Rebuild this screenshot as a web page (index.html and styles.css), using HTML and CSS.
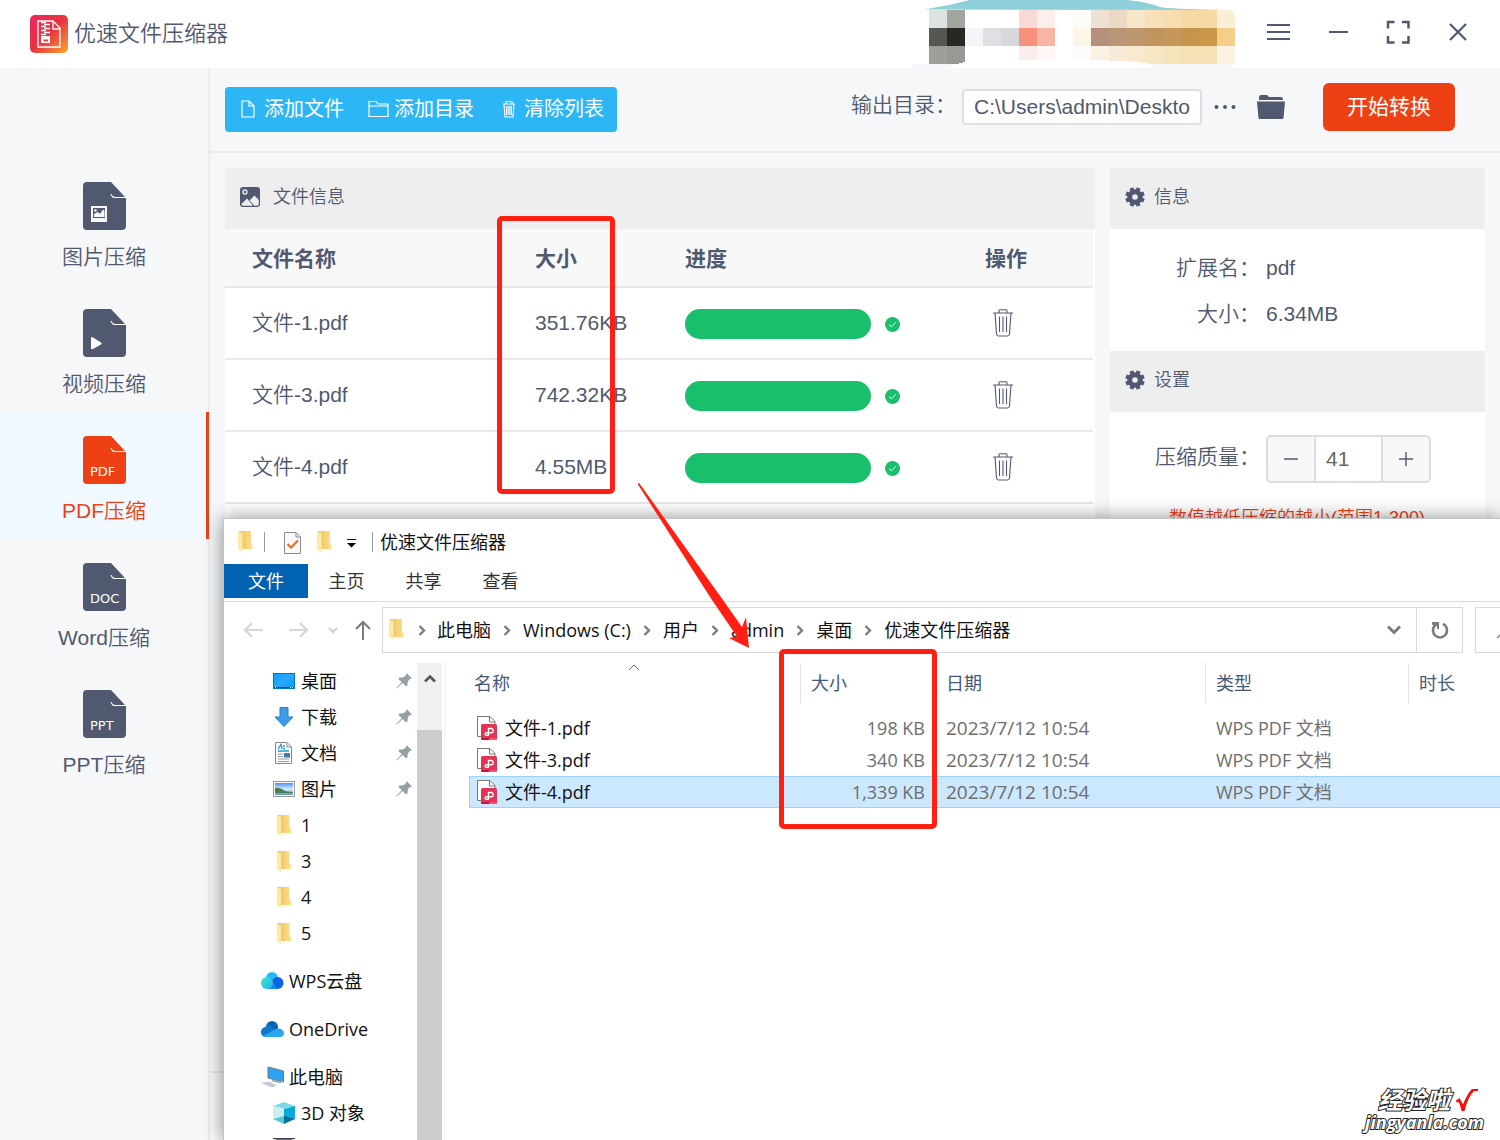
FILE: index.html
```html
<!DOCTYPE html>
<html lang="zh-CN">
<head>
<meta charset="utf-8">
<title>优速文件压缩器</title>
<link rel="stylesheet" href="styles.css">
</head>
<body>
<svg class="defs" aria-hidden="true">
  <defs>
    <linearGradient id="g-logo" x1="0" y1="0" x2="1" y2="1"><stop offset="0" stop-color="#e9265f"/><stop offset=".5" stop-color="#e93440"/><stop offset="1" stop-color="#f6a72f"/></linearGradient>
    <linearGradient id="g-folder" x1="0" y1="0" x2="1" y2="0"><stop offset="0" stop-color="#e8c15c"/><stop offset="1" stop-color="#ffe08a"/></linearGradient>
    <linearGradient id="g-desk" x1="0" y1="0" x2="1" y2="1"><stop offset="0" stop-color="#0aa0fb"/><stop offset=".5" stop-color="#28a9ff"/><stop offset="1" stop-color="#0a98f5"/></linearGradient>
    <linearGradient id="g-sky" x1="0" y1="0" x2="0" y2="1"><stop offset="0" stop-color="#4d8ff0"/><stop offset=".5" stop-color="#d5ecf8"/><stop offset="1" stop-color="#5d93c4"/></linearGradient>
    <linearGradient id="g-wps" x1="0" y1="0" x2="1" y2="1"><stop offset="0" stop-color="#3fe6c0"/><stop offset="1" stop-color="#18b4f5"/></linearGradient>
  </defs>
  <symbol id="page-shape" viewBox="0 0 43 48"><path d="M4 0H28L42 15H31Q28 14 28 12Q28 15 31 16H43V44Q43 48 39 48H4Q0 48 0 44V4Q0 0 4 0Z" fill="currentColor"/><path d="M28 12Q29 15.500 32 15.500H42" fill="none" stroke="#fff" stroke-width="1"/></symbol>
  <symbol id="trash" viewBox="0 0 20 28"><path d="M0 4H20M6 4V2Q6 .8 7 .8H13Q14 .8 14 2V4M2 4L3.500 25Q3.700 27 5.500 27H14.500Q16.300 27 16.500 25L18 4M6.500 7.500V23M10 7.500V23M13.500 7.500V23" fill="none" stroke="currentColor" stroke-width="1.100"/></symbol>
  <symbol id="gear" viewBox="0 0 20 20"><g fill="none" stroke="currentColor"><circle cx="10" cy="10" r="5.300" stroke-width="5"/><path stroke-width="4" d="M15.500 12.300L19 13.700M15.500 7.700L19 6.300M4.500 12.300L1 13.700M4.500 7.700L1 6.300M12.300 15.500L13.700 19M7.700 15.500L6.300 19M12.300 4.500L13.700 1M7.700 4.500L6.300 1"/></g></symbol>
  <symbol id="folder-y" viewBox="0 0 15 21"><path d="M1 0H13V13L14.500 14V18H4Z" fill="url(#g-folder)"/><path d="M0 0L4.500 2.500V21L0 18Z" fill="#ffe9a6"/></symbol>
  <symbol id="crumb" viewBox="0 0 8 11"><path d="M1.500 1L6 5.500L1.500 10" fill="none" stroke="#7d7d7d" stroke-width="2.400"/></symbol>
  <symbol id="pin" viewBox="0 0 16 16"><path d="M10.500 0L16 5.500L13.800 6L11.800 8.500L11.500 12.500L9.800 13.300L6.700 10L.8 15.600L.3 15L5.700 9.200L2.500 6L3.500 4.500L7.500 4.200L10 2.200Z" fill="#93a0a6"/></symbol>
  <symbol id="pdf-file" viewBox="0 0 20 24"><path d="M.5 .5H13L18 5.500V20.500H.5Z" fill="#fff" stroke="#777"/><path d="M12.500 .5V6H18" fill="none" stroke="#777"/><rect x="4" y="8" width="16" height="16" rx="1.500" fill="#e23358"/><path d="M4 22H12V24H5.500Q4 24 4 22Z" fill="#c4133e"/><path d="M12 22H20Q20 24 18.500 24H12Z" fill="#ff4f6c"/><path d="M11.500 19.500V12.500H14.500A2.200 2.200 0 0 1 14.500 16.800H9A1.300 1.300 0 0 0 9 19.300H11.500" fill="none" stroke="#fff" stroke-width="1.400"/></symbol>
</svg>

<div class="app">
  <header class="titlebar">
    <svg class="logo" viewBox="0 0 38 38" aria-hidden="true"><rect width="38" height="38" rx="5" fill="url(#g-logo)"/><path d="M8 6H23L30 13V32H8Z" fill="none" stroke="#fff" stroke-width="1.300"/><path d="M23 6V14H30" fill="none" stroke="#fff" stroke-width="1.300"/><path d="M11 7.500H16M14 9.500H20M11 11.500H16M14 13.500H20M11 15.500H16M14 17.500H20M11 19.500H16" stroke="#fff" stroke-width="1.300"/><path fill="#fff" fill-rule="evenodd" d="M11 21H20V28H11ZM13.500 24.500V26.500H18V24.500Z"/></svg>
    <h1 class="app-name">优速文件压缩器</h1>
    <svg class="account" viewBox="0 0 330 68" aria-hidden="true" shape-rendering="crispEdges">
      <path d="M16 9.500Q40 6 62 0H219Q240 2 252 7Q258 9 322 10Z" fill="#8dd0d9" shape-rendering="auto"/>
      <g id="mosaic">
        <path fill="#dde3e2" d="M21 10h18v18h-18z"/><path fill="#a0a59e" d="M39 10h18v18h-18z"/><path fill="#f9dad5" d="M111 10h18v18h-18z"/><path fill="#fdeeec" d="M129 10h18v18h-18z"/><path fill="#fdfcf8" d="M165 10h18v18h-18z"/><path fill="#eee1d3" d="M183 10h18v18h-18z"/><path fill="#ebd9c5" d="M201 10h18v18h-18z"/><path fill="#f6e7c9" d="M219 10h18v18h-18z"/><path fill="#f6e1bb" d="M237 10h18v18h-18z"/><path fill="#f6deaf" d="M255 10h18v18h-18z"/><path fill="#f5daa6" d="M273 10h36v18h-36z"/><path fill="#f9eed6" d="M309 10h12l6 3v15h-18z"/>
        <path fill="#545850" d="M21 28h18v18h-18z"/><path fill="#272822" d="M39 28h18v18h-18z"/><path fill="#f4f5f7" d="M57 28h18v18h-18z"/><path fill="#dfe0e5" d="M75 28h18v18h-18z"/><path fill="#d6d8db" d="M93 28h18v18h-18z"/><path fill="#f7917a" d="M111 28h18v18h-18z"/><path fill="#f8b5a6" d="M129 28h18v18h-18z"/><path fill="#fdf6e8" d="M165 28h18v18h-18z"/><path fill="#b5907d" d="M183 28h18v18h-18z"/><path fill="#b99676" d="M201 28h18v18h-18z"/><path fill="#be976d" d="M219 28h18v18h-18z"/><path fill="#bf945e" d="M237 28h18v18h-18z"/><path fill="#c59759" d="M255 28h18v18h-18z"/><path fill="#c6944b" d="M273 28h18v18h-18z"/><path fill="#cb9849" d="M291 28h18v18h-18z"/><path fill="#f3d08a" d="M309 28h18v18h-18z"/>
        <path fill="#9e9f99" d="M21 46h18v18h-18z"/><path fill="#979994" d="M39 46h18v16l-8 2h-10z"/><path fill="#fcedeb" d="M111 46h18v14h-18z"/><path fill="#fef7f6" d="M129 46h18v14h-18z"/><path fill="#fdfcfa" d="M165 46h18v14h-18z"/><path fill="#f9f1e1" d="M183 46h18v14h-18z"/><path fill="#f7ead6" d="M201 46h18v15h-18z"/><path fill="#f8e9cf" d="M219 46h18v17l-18-2z"/><path fill="#f7e6c3" d="M237 46h18v18h-14l-4-2z"/><path fill="#f6e4bd" d="M255 46h18v18h-18z"/><path fill="#f5e1b5" d="M273 46h36v18h-36z"/><path fill="#faf3e2" d="M309 46h18v18h-18z"/>
      </g>
      <path d="M2 64H50L36 68H8ZM240 64H327L320 68H250Z" fill="#f5f6f9"/>
    </svg>
    <nav class="window-buttons">
      <button aria-label="菜单"><svg width="24" height="24" viewBox="0 0 24 24"><path d="M1 5H24M1 12H24M1 19H24" stroke="currentColor" stroke-width="2"/></svg></button>
      <button aria-label="最小化"><svg width="24" height="24" viewBox="0 0 24 24"><path d="M3 12H22" stroke="currentColor" stroke-width="2"/></svg></button>
      <button aria-label="最大化"><svg width="24" height="24" viewBox="0 0 24 24"><path d="M2 8.500V2H8.500M16 2H22.500V8.500M22.500 16V22.500H16M8.500 22.500H2V16" fill="none" stroke="currentColor" stroke-width="2.500"/></svg></button>
      <button aria-label="关闭"><svg width="24" height="24" viewBox="0 0 24 24"><path d="M4 4L20 20M20 4L4 20" stroke="currentColor" stroke-width="2.200"/></svg></button>
    </nav>
  </header>

  <div class="app-body">
    <nav class="sidebar">
      <a class="tool" href="#image"><svg class="tool-icon" viewBox="0 0 43 48" aria-hidden="true"><use href="#page-shape"/><path fill="#f6f7f9" fill-rule="evenodd" d="M8 24H24V40H8ZM10 26V36H22V26Z"/><path fill="#f6f7f9" d="M11 35V32L15 30L17 32L20 27.500L21.500 29V35Z"/><circle cx="12.500" cy="28.500" r="1.300" fill="#f6f7f9"/></svg>图片压缩</a>
      <a class="tool" href="#video"><svg class="tool-icon" viewBox="0 0 43 48" aria-hidden="true"><use href="#page-shape"/><path fill="#fff" d="M8 28.500Q8.500 27.500 10 28.500L18 33.500Q19.500 34.500 18 35.500L10 40Q8.500 40.500 8 39.500Z"/></svg>视频压缩</a>
      <a class="tool active" href="#pdf"><svg class="tool-icon" viewBox="0 0 43 48" aria-hidden="true"><use href="#page-shape"/><text x="7" y="40" class="tag">PDF</text></svg>PDF压缩</a>
      <a class="tool" href="#word"><svg class="tool-icon" viewBox="0 0 43 48" aria-hidden="true"><use href="#page-shape"/><text x="7" y="40" class="tag">DOC</text></svg>Word压缩</a>
      <a class="tool" href="#ppt"><svg class="tool-icon" viewBox="0 0 43 48" aria-hidden="true"><use href="#page-shape"/><text x="7" y="40" class="tag">PPT</text></svg>PPT压缩</a>
    </nav>

    <main class="main">
      <div class="toolbar">
        <div class="list-actions">
          <button><svg width="24" height="20" viewBox="0 0 24 20"><path d="M5 2H12L17 7V18H5ZM12 2V7H17" fill="none" stroke="currentColor" stroke-width="1.200"/></svg>添加文件</button>
          <button><svg width="24" height="20" viewBox="0 0 24 20"><path d="M2 17.500V2.500H9L11 5H21V17.500ZM2 7H21" fill="none" stroke="currentColor" stroke-width="1.200"/></svg>添加目录</button>
          <button><svg width="24" height="20" viewBox="0 0 24 20"><path d="M6 5H18M9 5V2.500H15V5M7 5L8 18H16L17 5M9.500 7V16M11.200 7V16M12.900 7V16M14.500 7V16" fill="none" stroke="currentColor" stroke-width="1.100"/></svg>清除列表</button>
        </div>
        <label class="out-label" for="out">输出目录：</label>
        <input class="out-path" id="out" type="text" value="C:\Users\admin\Deskto">
        <button class="icon-button more" aria-label="更多"><svg width="22" height="6" viewBox="0 0 22 6" fill="currentColor"><circle cx="2.500" cy="3" r="2"/><circle cx="11" cy="3" r="2"/><circle cx="19.500" cy="3" r="2"/></svg></button>
        <button class="icon-button" aria-label="打开目录"><svg width="30" height="26" viewBox="0 0 30 26" fill="currentColor"><path d="M3 5V3Q3 1 5 1H11L13 3H25Q27 3 27 5.500V6H3Z"/><path d="M1 7.500H29L27.500 24Q27.500 25 26 25H4Q2.500 25 2.500 24Z"/></svg></button>
        <button class="start">开始转换</button>
      </div>

      <div class="content">
        <section class="panel files">
          <h2 class="panel-title wide"><svg width="20" height="20" viewBox="0 0 20 20" aria-hidden="true"><rect width="20" height="20" rx="3" fill="currentColor"/><path d="M1.500 17L7 11.500L13 18.800H3Q1.500 18.800 1.500 17ZM9.500 13.500L14.500 8.500L18.800 13V17Q18.500 18.800 17 18.800H14.500Z" fill="#eee"/><circle cx="5" cy="5" r="2" fill="none" stroke="#eee" stroke-width="1.300"/></svg>文件信息</h2>
          <table class="file-table">
            <colgroup><col class="c-name"><col class="c-size"><col class="c-progress"><col></colgroup>
            <thead><tr><th>文件名称</th><th>大小</th><th>进度</th><th>操作</th></tr></thead>
            <tbody>
              <tr><td>文件-1.pdf</td><td>351.76KB</td><td><div class="done"><progress value="100" max="100" aria-label="进度"></progress><svg width="15" height="15" viewBox="0 0 15 15"><circle cx="7.500" cy="7.500" r="7.500" fill="#1abf6b"/><path d="M4 7.500L6.500 9.800L11 5" fill="none" stroke="#fff"/></svg></div></td><td><button class="delete" aria-label="删除"><svg width="20" height="28"><use href="#trash"/></svg></button></td></tr>
              <tr><td>文件-3.pdf</td><td>742.32KB</td><td><div class="done"><progress value="100" max="100" aria-label="进度"></progress><svg width="15" height="15" viewBox="0 0 15 15"><circle cx="7.500" cy="7.500" r="7.500" fill="#1abf6b"/><path d="M4 7.500L6.500 9.800L11 5" fill="none" stroke="#fff"/></svg></div></td><td><button class="delete" aria-label="删除"><svg width="20" height="28"><use href="#trash"/></svg></button></td></tr>
              <tr><td>文件-4.pdf</td><td>4.55MB</td><td><div class="done"><progress value="100" max="100" aria-label="进度"></progress><svg width="15" height="15" viewBox="0 0 15 15"><circle cx="7.500" cy="7.500" r="7.500" fill="#1abf6b"/><path d="M4 7.500L6.500 9.800L11 5" fill="none" stroke="#fff"/></svg></div></td><td><button class="delete" aria-label="删除"><svg width="20" height="28"><use href="#trash"/></svg></button></td></tr>
            </tbody>
          </table>
        </section>

        <aside class="panel details">
          <h2 class="panel-title"><svg width="20" height="20" aria-hidden="true"><use href="#gear"/></svg>信息</h2>
          <dl class="info">
            <dt>扩展名：</dt><dd>pdf</dd>
            <dt>大小：</dt><dd>6.34MB</dd>
          </dl>
          <h2 class="panel-title"><svg width="20" height="20" aria-hidden="true"><use href="#gear"/></svg>设置</h2>
          <div class="settings">
            <label for="quality">压缩质量：</label>
            <div class="stepper">
              <button aria-label="减少"><svg width="14" height="14" viewBox="0 0 14 14"><path d="M0 7H14" stroke="currentColor" stroke-width="1.400"/></svg></button>
              <input id="quality" type="text" value="41">
              <button aria-label="增加"><svg width="14" height="14" viewBox="0 0 14 14"><path d="M0 7H14M7 0V14" stroke="currentColor" stroke-width="1.400"/></svg></button>
            </div>
          </div>
          <p class="hint">数值越低压缩的越小(范围1-300)</p>
        </aside>
      </div>
      <footer class="app-footer"></footer>
    </main>
  </div>
</div>

<section class="explorer">
  <header class="ex-title">
    <svg class="ex-folder" width="15" height="21" aria-hidden="true"><use href="#folder-y"/></svg>
    <i class="bar"></i>
    <svg class="ex-doc" width="17" height="22" viewBox="0 0 17 22" aria-hidden="true"><path d="M.5 .5H12L16.500 5V21.500H.5Z" fill="#f9f9f9" stroke="#8b8b8b"/><path d="M12 .5V5H16.500" fill="none" stroke="#8b8b8b"/><path d="M3.500 12L7 15.500L14 8.500" fill="none" stroke="#f26322" stroke-width="2"/></svg>
    <svg class="ex-folder2" width="15" height="21" aria-hidden="true"><use href="#folder-y"/></svg>
    <svg class="ex-drop" width="10" height="9" viewBox="0 0 10 9" aria-hidden="true"><path d="M1 .5H10" stroke="#111"/><path d="M1 4H10L5.500 8.500Z"/></svg>
    <i class="bar"></i>
    <span class="ex-name">优速文件压缩器</span>
  </header>
  <nav class="ribbon">
    <a class="file-tab" href="#file">文件</a><a href="#home">主页</a><a href="#share">共享</a><a href="#view">查看</a>
  </nav>
  <div class="address-row">
    <div class="history">
      <button aria-label="后退"><svg width="20" height="16" viewBox="0 0 20 16"><path d="M20 8H2M9 1L2 8L9 15" fill="none" stroke="#d5d5d5" stroke-width="2"/></svg></button>
      <button class="fwd" aria-label="前进"><svg width="20" height="16" viewBox="0 0 20 16"><path d="M0 8H18M11 1L18 8L11 15" fill="none" stroke="#d5d5d5" stroke-width="2"/></svg></button>
      <button class="recent" aria-label="最近位置"><svg width="10" height="7" viewBox="0 0 10 7"><path d="M1 1L5 5L9 1" fill="none" stroke="#d0d0d0" stroke-width="2"/></svg></button>
      <button class="up" aria-label="上移"><svg width="16" height="20" viewBox="0 0 16 20"><path d="M8 20V2M1 9L8 2L15 9" fill="none" stroke="#7b7b7b" stroke-width="2"/></svg></button>
    </div>
    <div class="address">
      <svg class="crumb-folder" width="15" height="21" aria-hidden="true"><use href="#folder-y"/></svg>
      <ol class="crumbs">
        <li><svg width="8" height="11"><use href="#crumb"/></svg><a href="#pc">此电脑</a></li>
        <li><svg width="8" height="11"><use href="#crumb"/></svg><a href="#c">Windows (C:)</a></li>
        <li><svg width="8" height="11"><use href="#crumb"/></svg><a href="#users">用户</a></li>
        <li><svg width="8" height="11"><use href="#crumb"/></svg><a href="#admin">admin</a></li>
        <li><svg width="8" height="11"><use href="#crumb"/></svg><a href="#desktop">桌面</a></li>
        <li><svg width="8" height="11"><use href="#crumb"/></svg><a href="#here">优速文件压缩器</a></li>
      </ol>
      <button class="addr-drop" aria-label="展开"><svg width="14" height="10" viewBox="0 0 14 10"><path d="M1 1.500L7 7.500L13 1.500" fill="none" stroke="#7b7b7b" stroke-width="3"/></svg></button>
      <button class="refresh" aria-label="刷新"><svg width="18" height="18" viewBox="0 0 18 18"><path d="M4.500 4Q2 6 2 9.500A7 7 0 0 0 16 9.500Q16 5 12 2.800" fill="none" stroke="#7b7b7b" stroke-width="2.600"/><path d="M1 1H8V8H6V5L4 5.500L1 3.500Z" fill="#7b7b7b"/></svg></button>
    </div>
    <div class="search"><svg width="6" height="8" viewBox="0 0 6 8"><path d="M3 7L6 4" stroke="#7d8795" stroke-width="1.500"/></svg></div>
  </div>

  <div class="ex-body">
    <ul class="tree">
      <li><svg class="t-icon" viewBox="0 0 22 22"><rect x=".5" y="3.500" width="21" height="15" fill="url(#g-desk)" stroke="#0675bf"/><path d="M1 17.500H21" stroke="#06497c"/><path d="M2 17.500H3M17 17.500H18M19 17.500H20" stroke="#fff"/></svg><a href="#t1">桌面</a><svg class="pin" width="16" height="16"><use href="#pin"/></svg></li>
      <li><svg class="t-icon" viewBox="0 0 22 22"><path d="M7 1.500H15V11H20L11 20.500L2 11H7Z" fill="#3d9be9" stroke="#2380cf"/></svg><a href="#t2">下载</a><svg class="pin" width="16" height="16"><use href="#pin"/></svg></li>
      <li><svg class="t-icon" viewBox="0 0 22 22"><path d="M2.500 .5H14L18.500 5V21.500H2.500Z" fill="#fff" stroke="#888"/><path d="M14 .5V5H18.500" fill="none" stroke="#888"/><path d="M5 7L8 2.500L9 7M10 4H12M10 6.500H12M5 9H16" fill="none" stroke="#1f96d8" stroke-width="1.300"/><path d="M5 12H10M5 14.500H10M5 17H16M5 19.500H16" stroke="#9a9a9a"/><rect x="11" y="11" width="6" height="4.500" fill="#3e79b0"/></svg><a href="#t3">文档</a><svg class="pin" width="16" height="16"><use href="#pin"/></svg></li>
      <li><svg class="t-icon" viewBox="0 0 22 22"><rect x=".5" y="3.500" width="21" height="15" fill="#fff" stroke="#999"/><rect x="2" y="5" width="18" height="12" fill="url(#g-sky)"/><path d="M2 10Q7 9 12 13Q16 14 20 14V15H2Z" fill="#4b7a5c"/></svg><a href="#t4">图片</a><svg class="pin" width="16" height="16"><use href="#pin"/></svg></li>
      <li><svg class="t-icon folder" viewBox="0 0 15 21"><use href="#folder-y"/></svg><a href="#t5">1</a></li>
      <li><svg class="t-icon folder" viewBox="0 0 15 21"><use href="#folder-y"/></svg><a href="#t6">3</a></li>
      <li><svg class="t-icon folder" viewBox="0 0 15 21"><use href="#folder-y"/></svg><a href="#t7">4</a></li>
      <li><svg class="t-icon folder" viewBox="0 0 15 21"><use href="#folder-y"/></svg><a href="#t8">5</a></li>
      <li class="root"><svg class="r-icon" viewBox="0 0 24 24"><circle cx="12" cy="9" r="6" fill="#27b8fb"/><circle cx="17.500" cy="14" r="6" fill="#0b62e4"/><path d="M8 20H17.500L12 12Z" fill="#168af0"/><circle cx="7" cy="14" r="6" fill="url(#g-wps)"/></svg><a href="#t9">WPS云盘</a></li>
      <li class="root"><svg class="r-icon" viewBox="0 0 24 24"><circle cx="12" cy="10" r="6" fill="#0a63b5"/><path d="M5 20A5 5 0 0 1 4 10.500Q9 7 13 11L20 20Z" fill="#1077d2"/><path d="M3 19L17 11.500Q23 11 24 16Q24 20 20 20H5Q3.500 20 3 19Z" fill="#28a8ea"/></svg><a href="#t10">OneDrive</a></li>
      <li class="root"><svg class="r-icon" viewBox="0 0 24 24"><path d="M8 2L23.500 6V17L8 13Z" fill="#2ea1f3" stroke="#63798a"/><path d="M12 15.500L20 17.500L23 16" stroke="#9aa5ae" fill="none" stroke-width="1.500"/><path d="M1 18L9 16.500L17 20.500L12 22.500Z" fill="#c3ccd4"/></svg><a href="#t11">此电脑</a></li>
      <li><svg class="t-icon" viewBox="0 0 22 22"><path d="M11 0L22 4L11 7L0 4Z" fill="#7fd8e8"/><path d="M0 4L11 7V18L0 17Z" fill="#cdeff3"/><path d="M22 4L11 7V18L22 17Z" fill="#09a9d8"/><path d="M0 17L11 14V22Z" fill="#52c9d8"/><path d="M22 17L11 14V22Z" fill="#08729a"/></svg><a href="#t12">3D 对象</a></li>
      <li><svg class="t-icon" viewBox="0 0 22 22"><rect width="22" height="18" fill="#444"/><path d="M0 2H3M19 2H22" stroke="#ddd" stroke-width="2"/><rect x="3" y="1" width="16" height="16" fill="#4673c8"/></svg></li>
    </ul>
    <div class="scrollbar"><button aria-label="向上滚动"><svg width="12" height="9" viewBox="0 0 12 9"><path d="M1 7.500L6 2.500L11 7.500" fill="none" stroke="#555" stroke-width="2.600"/></svg></button><div class="thumb"></div></div>
    <div class="listing">
      <table>
        <colgroup><col class="l-name"><col class="l-size"><col class="l-date"><col class="l-type"><col></colgroup>
        <thead><tr>
          <th><span>名称<svg class="sort" width="12" height="7" viewBox="0 0 12 7"><path d="M1 6L6 1L11 6" fill="none" stroke="#666"/></svg></span></th>
          <th><span>大小</span></th><th><span>日期</span></th><th><span>类型</span></th><th><span>时长</span></th>
        </tr></thead>
        <tbody>
          <tr><td><div class="doc"><svg width="20" height="24"><use href="#pdf-file"/></svg>文件-1.pdf</div></td><td>198 KB</td><td>2023/7/12 10:54</td><td>WPS PDF 文档</td><td></td></tr>
          <tr><td><div class="doc"><svg width="20" height="24"><use href="#pdf-file"/></svg>文件-3.pdf</div></td><td>340 KB</td><td>2023/7/12 10:54</td><td>WPS PDF 文档</td><td></td></tr>
          <tr class="selected"><td><div class="doc"><svg width="20" height="24"><use href="#pdf-file"/></svg>文件-4.pdf</div></td><td>1,339 KB</td><td>2023/7/12 10:54</td><td>WPS PDF 文档</td><td></td></tr>
        </tbody>
      </table>
    </div>
  </div>
</section>

<div class="mark mark-before"></div>
<div class="mark mark-after"></div>
<svg class="arrow" viewBox="0 0 112 166" aria-hidden="true"><path d="M0 0L1.500 .5L85 117L104 144L108 134L111 165L91 155L99 153.500L74 117L0 1.500Z" fill="#ff1f13"/></svg>

<div class="watermark">
  <div class="wm-top">经验啦<svg width="24" height="24" viewBox="0 0 24 24" aria-hidden="true"><path d="M2 12.500L5.500 10L9 16.500Q13 6 18 1L24 1V3H20Q14 9 10.500 23H7.500Q6 16 4.500 14L2.500 14.500Z" fill="#fb0d0d"/></svg></div>
  <div class="wm-site">jingyanla.com</div>
</div>
</body>
</html>
```
FILE: styles.css
```css
* { box-sizing: border-box; }

body {
  margin: 0;
  min-height: 100vh;
  position: relative;
  overflow: hidden;
  color: #50596f;
  font: 350 21px/30px "Liberation Sans", "Noto Sans CJK SC", sans-serif;
}

h1, h2, p, ul, ol, dl, dd { margin: 0; padding: 0; font-weight: inherit; }
ul, ol { list-style: none; }
a { color: inherit; text-decoration: none; }
button, input { font: inherit; color: inherit; margin: 0; padding: 0; }
button { border: 0; background: none; display: flex; align-items: center; justify-content: center; }
svg { flex: none; display: block; }
.defs { position: absolute; width: 0; height: 0; }

/* compressor window */
.app { min-height: 100vh; display: flex; flex-direction: column; }

.titlebar { height: 68px; display: flex; align-items: center; padding: 0 12px 0 30px; background: #fff; }
.logo { width: 38px; height: 38px; }
.app-name { margin-left: 6px; font-size: 22px; flex: 1; }
.account { width: 330px; height: 68px; margin-right: 10px; }
.window-buttons { display: flex; padding-bottom: 4px; }
.window-buttons button { width: 60px; height: 60px; }

.app-body { flex: 1; display: flex; background: #f6f7f9; }

.sidebar { width: 210px; padding-top: 90px; border-right: 2px solid #ececef; }
.tool { height: 127px; padding-top: 24px; display: flex; flex-direction: column; align-items: center; gap: 12px; }
.tool-icon { width: 43px; height: 48px; }
.tool.active { background: #f0f9ff; color: #ee4015; border-right: 3px solid #ee4015; margin-right: -1px; padding-left: 2px; }
.tag { font: 13px "DejaVu Sans", sans-serif; fill: #fff; }

.main { flex: 1; display: flex; flex-direction: column; min-width: 0; }

.toolbar { height: 85px; display: flex; align-items: center; padding: 0 45px 5px 15px; border-bottom: 2px solid #ececef; }
.list-actions { display: flex; gap: 23px; height: 45px; padding: 0 13px 0 12px; border-radius: 4px; background: #2db6f5; color: #fff; font-size: 20px; font-weight: 400; margin-right: auto; margin-top: 4px; }
.list-actions button { gap: 3px; }
.out-label { margin-right: 6px; padding-bottom: 4px; }
.out-path { width: 240px; height: 36px; padding: 0 10px; border: 2px solid #dcdfe4; border-radius: 4px; background: #fff; }
.icon-button { width: 30px; height: 36px; margin-left: 16px; }
.icon-button.more { margin-left: 8px; }
.start { width: 132px; height: 48px; margin-left: 37px; border-radius: 6px; background: #ee4015; color: #fff; font-weight: 400; }

.content { flex: 1; display: flex; gap: 15px; padding: 15px 15px 0; }
.panel { background: #fff; }
.files { flex: 1; }
.details { width: 375px; }
.panel-title { height: 61px; padding: 0 15px 4px; display: flex; align-items: center; gap: 9px; background: #eee; font-size: 18px; line-height: 26px; }
.panel-title.wide { gap: 13px; }

.file-table { width: calc(100% - 2px); table-layout: fixed; border-spacing: 0; }
.c-name { width: 310px; }
.c-size { width: 150px; }
.c-progress { width: 300px; }
.file-table th, .file-table td { padding: 0; text-align: left; border-bottom: 2px solid #e8e8e8; }
.file-table th { height: 59px; padding-top: 2px; background: #f8f8f8; font-weight: 700; }
.file-table td { height: 72px; }
.file-table th:first-child, .file-table td:first-child { padding-left: 27px; }
.done { display: flex; align-items: center; gap: 14px; padding-top: 2px; }
progress { appearance: none; width: 186px; height: 30px; border: 0; border-radius: 15px; overflow: hidden; background: #1abf6b; }
progress::-webkit-progress-bar { background: #e9ebf0; }
progress::-webkit-progress-value { background: #1abf6b; }
.delete { margin-left: 8px; }

.info { display: grid; grid-template-columns: 150px 1fr; column-gap: 6px; padding: 16px 0 14px; line-height: 46px; }
.info dt { text-align: right; }
.settings { display: grid; grid-template-columns: 150px 165px; column-gap: 6px; align-items: center; padding-top: 23px; text-align: right; }
.settings label { padding-bottom: 4px; }
.stepper { display: flex; height: 48px; border: 2px solid #dcdce2; border-radius: 5px; background: #f8f8f8; overflow: hidden; }
.stepper button { width: 46px; }
.stepper input { width: 69px; border: solid #dcdce2; border-width: 0 2px; padding-left: 10px; background: #fff; color: #666; }
.hint { padding: 20px 0 0 59px; color: #ee4015; font-size: 18px; }

.app-footer { height: 69px; border-top: 2px solid #e4e5e8; background: #f9f9fa; }

/* file explorer window floating over the compressor */
.explorer {
  position: absolute;
  inset: 518px 0 0 223px;
  display: flex;
  flex-direction: column;
  overflow: hidden;
  background: #fff;
  border: solid #c2c3c5;
  border-width: 1px 0 0 1px;
  color: #111;
  font: 400 18px/26px "Open Sans", "Noto Sans CJK SC", sans-serif;
}
.app::after { content: ""; position: absolute; inset: 518px 0 0 223px; box-shadow: 0 0 18px rgba(0, 0, 0, .45); }

.ex-title { height: 45px; display: flex; align-items: center; padding-left: 14px; }
.bar { width: 1px; height: 20px; background: #9a9a9a; }
.ex-folder { margin-right: 11px; }
.ex-doc { margin: 2px 16px 0 19px; }
.ex-drop { margin: 4px 16px 0 14px; }
.ex-name { margin-left: 7px; }

.ribbon { display: flex; padding-bottom: 3px; border-bottom: 1px solid #dadbdc; color: #333; }
.ribbon a { width: 77px; line-height: 34px; text-align: center; }
.ribbon .file-tab { width: 84px; background: #0063b1; color: #fff; }

.address-row { display: flex; padding-top: 5px; }
.history { width: 158px; display: flex; align-items: center; padding-left: 19px; }
.history .fwd { margin-left: 26px; }
.history .recent { margin-left: 19px; }
.history .up { margin-left: 17px; }
.address { flex: 1; height: 46px; display: flex; align-items: center; border: 1px solid #d9d9d9; }
.crumb-folder { margin: 0 10px 2px 6px; }
.crumbs { display: flex; flex: 1; }
.crumbs li { display: flex; align-items: center; }
.crumbs svg { margin: 0 12px; }
.crumbs li:first-child svg { margin: 0 11px 0 4px; }
.addr-drop { width: 44px; height: 44px; }
.refresh { width: 46px; height: 44px; border-left: 1px solid #d9d9d9; }
.search { width: 25px; height: 46px; margin-left: 12px; border: 1px solid #d9d9d9; border-right: 0; display: flex; align-items: center; justify-content: flex-end; padding-top: 10px; }

.ex-body { flex: 1; min-height: 0; display: flex; padding-top: 10px; overflow: hidden; }
.tree { width: 193px; flex: none; }
.tree li { height: 36px; display: flex; align-items: center; padding: 0 5px 0 49px; }
.tree li.root { margin-top: 12px; padding-left: 36px; }
.tree a { flex: 1; margin-left: 6px; }
.tree .root a { margin-left: 5px; }
.t-icon { width: 22px; height: 22px; }
.t-icon.folder { height: 21px; }
.r-icon { width: 24px; height: 24px; }
.scrollbar { width: 25px; display: flex; flex-direction: column; background: #f0f0f0; }
.scrollbar button { height: 30px; margin-bottom: 37px; }
.thumb { flex: 1; background: #cdcdcd; }

.listing { flex: 1; min-width: 0; margin-left: 2px; border-left: 2px solid #f6f6f6; padding-left: 23px; }
.listing table { width: 100%; table-layout: fixed; border-spacing: 0; }
.l-name { width: 332px; }
.l-size { width: 135px; }
.l-date { width: 270px; }
.l-type { width: 203px; }
.listing th { padding: 0 0 9px; font-weight: 400; text-align: left; color: #44597a; }
.listing th span { display: block; height: 40px; line-height: 40px; padding-left: 10px; border-right: 1px solid #e3e3e3; position: relative; }
.listing th:first-child span { padding-left: 5px; }
.listing th:last-child span { border: 0; }
.sort { position: absolute; left: 50%; top: 1px; margin-left: -7px; }
.listing td { height: 32px; padding: 0 0 0 10px; color: #6d6d6d; border: solid transparent; border-width: 1px 0; white-space: nowrap; }
.listing td:first-child { padding-left: 7px; color: #111; border-left-width: 1px; }
.listing td:nth-child(2) { text-align: right; padding-right: 11px; }
.listing td:nth-child(3) { font-size: 19px; }
.doc { display: flex; align-items: center; gap: 8px; }
.selected td { background: #cce8ff; border-color: #99d1ff; }

/* call-outs drawn over both windows */
.mark { position: absolute; border: 5px solid #ff1f13; border-radius: 5px; pointer-events: none; }
.mark-before { left: 497px; top: 216px; width: 118px; height: 278px; }
.mark-after { left: 779px; top: 649px; width: 158px; height: 180px; }
.arrow { position: absolute; left: 638px; top: 483px; width: 112px; height: 166px; pointer-events: none; }

.watermark {
  position: absolute;
  right: 16px;
  bottom: 8px;
  text-align: right;
  color: #fff;
  font: italic 700 18px/20px "Open Sans", "Noto Sans CJK SC", sans-serif;
  -webkit-text-stroke: 2px #222;
  paint-order: stroke fill;
}
.wm-top { display: flex; align-items: center; justify-content: flex-end; gap: 4px; font-size: 24px; line-height: 22px; padding-right: 6px; }
```
